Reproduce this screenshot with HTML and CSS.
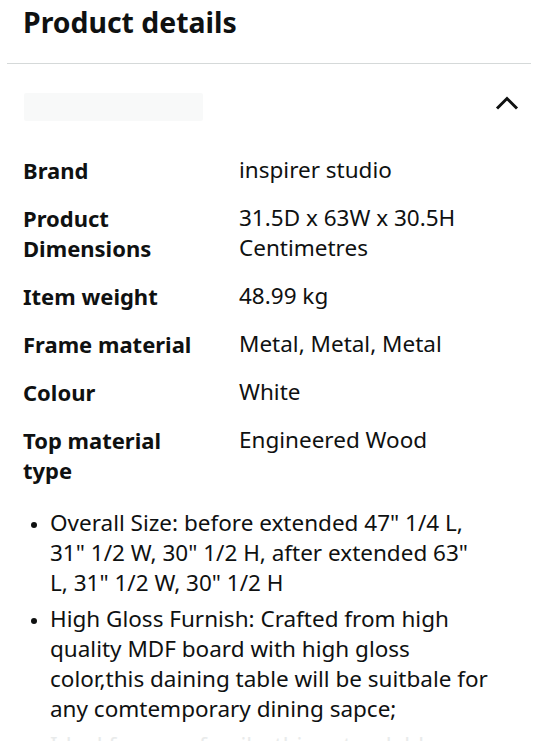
FILE: index.html
```html
<!DOCTYPE html>
<html lang="en">
<head>
<meta charset="utf-8">
<title>Product details</title>
<link rel="stylesheet" href="styles.css">
</head>
<body>
<main class="page">
  <h2 class="title">Product details</h2>
  <hr class="divider">
  <div class="expander">
    <div class="expander-label"></div>
    <svg class="chevron" width="24" height="16" viewBox="0 0 24 16" aria-hidden="true">
      <path d="M2 13.5 L12 3.5 L22 13.5" fill="none" stroke="#0f1111" stroke-width="3"/>
    </svg>
  </div>
  <dl class="specs">
    <dt>Brand</dt><dd>inspirer studio</dd>
    <dt>Product Dimensions</dt><dd>31.5D x 63W x 30.5H Centimetres</dd>
    <dt>Item weight</dt><dd>48.99 kg</dd>
    <dt>Frame material</dt><dd>Metal, Metal, Metal</dd>
    <dt>Colour</dt><dd>White</dd>
    <dt>Top material type</dt><dd>Engineered Wood</dd>
  </dl>
  <ul class="bullets">
    <li>Overall Size: before extended 47" 1/4 L, 31" 1/2 W, 30" 1/2 H, after extended 63" L, 31" 1/2 W, 30" 1/2 H</li>
    <li>High Gloss Furnish: Crafted from high quality MDF board with high gloss color,this daining table will be suitbale for any comtemporary dining sapce;</li>
    <li class="faded">Ideal for your family, this extendable dining table</li>
  </ul>
</main>
</body>
</html>
```

FILE: styles.css
```css
* { box-sizing: border-box; }
html, body {
  margin: 0;
  padding: 0;
  background: #ffffff;
}
body {
  font-family: "Noto Sans", "Open Sans", sans-serif;
  color: #0f1111;
  overflow: hidden;
  height: 741px;
}
.page {
  width: 540px;
  height: 741px;
  overflow: hidden;
}
.title {
  margin: 0;
  padding: 4px 23px 0;
  font-size: 28.4px;
  line-height: 36px;
  font-weight: 700;
  height: 63px;
}
.divider {
  margin: 0 9px 0 7px;
  border: 0;
  height: 1px;
  background: #d5d9d9;
}
.expander {
  display: flex;
  justify-content: space-between;
  align-items: flex-start;
  padding: 29px 23px 0 24px;
  height: 91px;
}
.expander-label {
  width: 179px;
  height: 28px;
  background: #f8f9f9;
  border-radius: 2px;
}
.chevron {
  margin-top: 2px;
  margin-right: -2px;
}
.specs {
  margin: 0;
  padding: 0 23px;
  display: grid;
  grid-template-columns: 216px 1fr;
  row-gap: 18px;
  font-size: 22px;
  line-height: 30px;
}
.specs dt {
  font-weight: 700;
  padding-right: 30px;
}
.specs dd {
  margin: 0;
  font-size: 22.5px;
}
.bullets {
  margin: 23px 0 0;
  padding: 0 49px 0 50px;
  font-size: 22.5px;
  line-height: 30px;
}
.bullets li {
  margin-bottom: 6px;
}
.bullets li::marker {
  font-size: 18px;
}
.bullets li.faded {
  color: #e9ebeb;
}
```
